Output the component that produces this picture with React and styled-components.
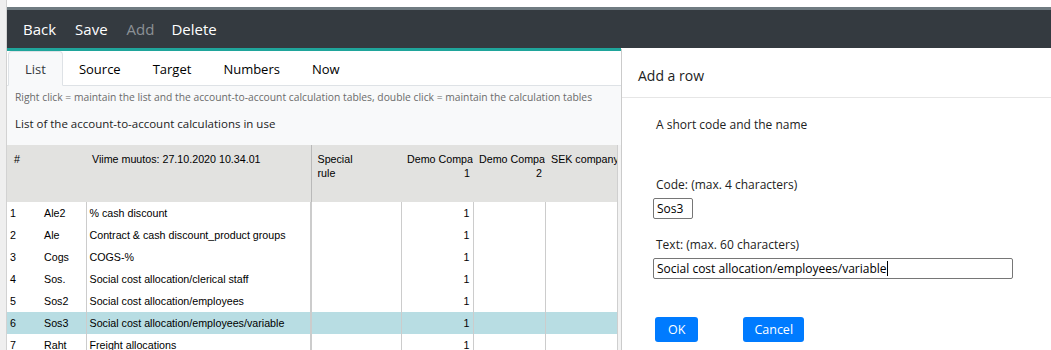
import React from 'react';
import styled, { createGlobalStyle } from 'styled-components';

const GlobalStyle = createGlobalStyle`
  html, body {
    margin: 0;
    padding: 0;
    background: #ffffff;
    overflow: hidden;
  }
`;

const Page = styled.div`
  display: flex;
  width: 1051px;
  height: 350px;
  overflow: hidden;
  font-family: 'Open Sans', sans-serif;
`;

const Gutter = styled.div`
  width: 6px;
  flex: none;
  background: #efefef;
  border-right: 1px solid #d2d2d2;
`;

const Frame = styled.div`
  flex: 1;
  display: flex;
  flex-direction: column;
  padding-top: 7px;
  min-width: 0;
`;

const Navbar = styled.div`
  height: 38px;
  flex: none;
  display: flex;
  align-items: center;
  gap: 19px;
  padding-left: 16px;
  background: #343a40;
  border-top: 3px solid #6f7b81;
`;

const NavItem = styled.span`
  font-size: 15px;
  margin-right: ${p => (p.disabled ? -2 : 0)}px;
  color: ${p => (p.disabled ? '#8c9196' : '#ffffff')};
`;

const Body = styled.div`
  flex: 1;
  display: flex;
  min-height: 0;
`;

const Main = styled.div`
  width: 614px;
  flex: none;
  display: flex;
  flex-direction: column;
  border-top: 3px solid #1fa59b;
  background: #f8f9fa;
`;

const TabBar = styled.div`
  height: 34px;
  flex: none;
  display: flex;
  align-items: flex-end;
  padding-left: 1px;
  background: #ffffff;
  border-bottom: 1px solid #dee2e6;
`;

const Tab = styled.div`
  height: 33px;
  display: flex;
  align-items: center;
  padding: 0 ${p => (p.active ? 16 : 15)}px;
  margin-bottom: -1px;
  font-size: 13px;
  color: ${p => (p.active ? '#343a40' : '#000000')};
  background: ${p => (p.active ? '#f8f9fa' : 'transparent')};
  border: 1px solid ${p => (p.active ? '#dee2e6' : 'transparent')};
  border-bottom-color: ${p => (p.active ? '#f8f9fa' : 'transparent')};
  border-radius: 4px 4px 0 0;
`;

const Hint = styled.div`
  flex: none;
  padding: 2px 0 0 8px;
  height: 18px;
  line-height: 18px;
  font-size: 10.3px;
  color: #6b6b6b;
`;

const Caption = styled.div`
  flex: none;
  padding: 0 0 0 8px;
  margin-top: 9px;
  height: 30px;
  line-height: 18px;
  font-size: 11.5px;
  color: #222222;
`;

const TableWrap = styled.div`
  display: flex;
  flex: 1;
  background: #ffffff;
`;

const Table = styled.table`
  width: 610px;
  flex: none;
  border-collapse: collapse;
  table-layout: fixed;
  font-family: 'Liberation Sans', Arial, sans-serif;
  font-size: 10.7px;
  color: #000000;
  align-self: flex-start;
`;

const Scroll = styled.div`
  width: 3px;
  flex: none;
  background: #f3f3f3;
  border-left: 1px solid #cfcfcf;
  border-right: 1px solid #cfcfcf;
`;

const Th = styled.th`
  height: 50px;
  padding: 7px ${p => (p.align === 'right' ? 3 : 6)}px 0 ${p => p.pl ?? 6}px;
  background: #e2e2e0;
  font-weight: normal;
  vertical-align: top;
  text-align: ${p => p.align || 'left'};
  white-space: pre;
  overflow: hidden;
  line-height: 14px;
  border-left: ${p => p.line || 'none'};
`;

const Row = styled.tr`
  background: ${p => (p.selected ? '#b8dde3' : 'transparent')};
`;

const Td = styled.td`
  height: 22px;
  padding: 0 3px;
  text-align: ${p => p.align || 'left'};
  white-space: nowrap;
  overflow: hidden;
  border-left: ${p => p.line || 'none'};
`;

const Panel = styled.div`
  flex: 1;
  display: flex;
  flex-direction: column;
  background: #ffffff;
  border-left: 1px solid #cbcbcb;
  margin-top: 1px;
`;

const PanelHeader = styled.div`
  height: 49px;
  flex: none;
  display: flex;
  align-items: center;
  padding: 4px 0 0 16px;
  box-sizing: border-box;
  font-size: 14px;
  color: #222222;
  border-bottom: 1px solid #e6e6e6;
`;

const PanelBody = styled.div`
  display: flex;
  flex-direction: column;
  align-items: flex-start;
  padding: 18px 0 0 30px;
  font-size: 12px;
  color: #222222;
`;

const Label = styled.div`
  padding-left: 4px;
  line-height: 18px;
  margin-top: ${p => p.mt || 0}px;
  margin-bottom: 4px;
`;

const Input = styled.div`
  box-sizing: border-box;
  width: ${p => p.w}px;
  height: ${p => p.h}px;
  margin-left: 1px;
  padding: 0 3px;
  display: flex;
  align-items: center;
  border: 1px solid #767676;
  border-radius: 2px;
  font-size: 12px;
  color: #000000;
`;

const Caret = styled.span`
  display: inline-block;
  width: 1px;
  height: 15px;
  background: #000000;
`;

const Buttons = styled.div`
  display: flex;
  gap: 45px;
  margin-top: 38px;
  padding-left: 3px;
`;

const Button = styled.div`
  height: 25px;
  padding: 0 ${p => p.px}px;
  display: flex;
  align-items: center;
  background: #007bff;
  border-radius: 3px;
  color: #ffffff;
  font-size: 12.5px;
`;

const rows = [
  ['1', 'Ale2', '% cash discount'],
  ['2', 'Ale', 'Contract & cash discount_product groups'],
  ['3', 'Cogs', 'COGS-%'],
  ['4', 'Sos.', 'Social cost allocation/clerical staff'],
  ['5', 'Sos2', 'Social cost allocation/employees'],
  ['6', 'Sos3', 'Social cost allocation/employees/variable'],
  ['7', 'Raht', 'Freight allocations'],
];

const cell = '1px solid #cccccc';
const thick = '2px solid #cccccc';

const App = () => (
  <Page>
    <GlobalStyle />
    <Gutter />
    <Frame>
      <Navbar>
        <NavItem>Back</NavItem>
        <NavItem>Save</NavItem>
        <NavItem disabled>Add</NavItem>
        <NavItem>Delete</NavItem>
      </Navbar>
      <Body>
        <Main>
          <TabBar>
            <Tab active>List</Tab>
            <Tab>Source</Tab>
            <Tab>Target</Tab>
            <Tab>Numbers</Tab>
            <Tab>Now</Tab>
          </TabBar>
          <Hint>
            Right click = maintain the list and the account-to-account calculation tables, double click = maintain the calculation tables
          </Hint>
          <Caption>List of the account-to-account calculations in use</Caption>
          <TableWrap>
            <Table>
              <colgroup>
                <col style={{ width: 34 }} />
                <col style={{ width: 45 }} />
                <col style={{ width: 225 }} />
                <col style={{ width: 90 }} />
                <col style={{ width: 72 }} />
                <col style={{ width: 72 }} />
                <col style={{ width: 72 }} />
              </colgroup>
              <thead>
                <tr>
                  <Th pl={7}>#</Th>
                  <Th />
                  <Th>Viime muutos: 27.10.2020 10.34.01</Th>
                  <Th line="1px solid #b9b9b9">{'Special\nrule'}</Th>
                  <Th align="right">{'Demo Company\n1'}</Th>
                  <Th align="right">{'Demo Company\n2'}</Th>
                  <Th>SEK company</Th>
                </tr>
              </thead>
              <tbody>
                {rows.map(([n, code, name]) => (
                  <Row key={n} selected={code === 'Sos3'}>
                    <Td>{n}</Td>
                    <Td>{code}</Td>
                    <Td line={cell}>{name}</Td>
                    <Td line={thick} />
                    <Td line={cell} align="right">1</Td>
                    <Td line={cell} />
                    <Td line={cell} />
                  </Row>
                ))}
              </tbody>
            </Table>
            <Scroll />
          </TableWrap>
        </Main>
        <Panel>
          <PanelHeader>Add a row</PanelHeader>
          <PanelBody>
            <Label>A short code and the name</Label>
            <Label mt={38}>Code: (max. 4 characters)</Label>
            <Input w={40} h={21}>Sos3</Input>
            <Label mt={17}>Text: (max. 60 characters)</Label>
            <Input w={360} h={21}>
              Social cost allocation/employees/variable<Caret />
            </Input>
            <Buttons>
              <Button px={13}>OK</Button>
              <Button px={11}>Cancel</Button>
            </Buttons>
          </PanelBody>
        </Panel>
      </Body>
    </Frame>
  </Page>
);

export default App;
